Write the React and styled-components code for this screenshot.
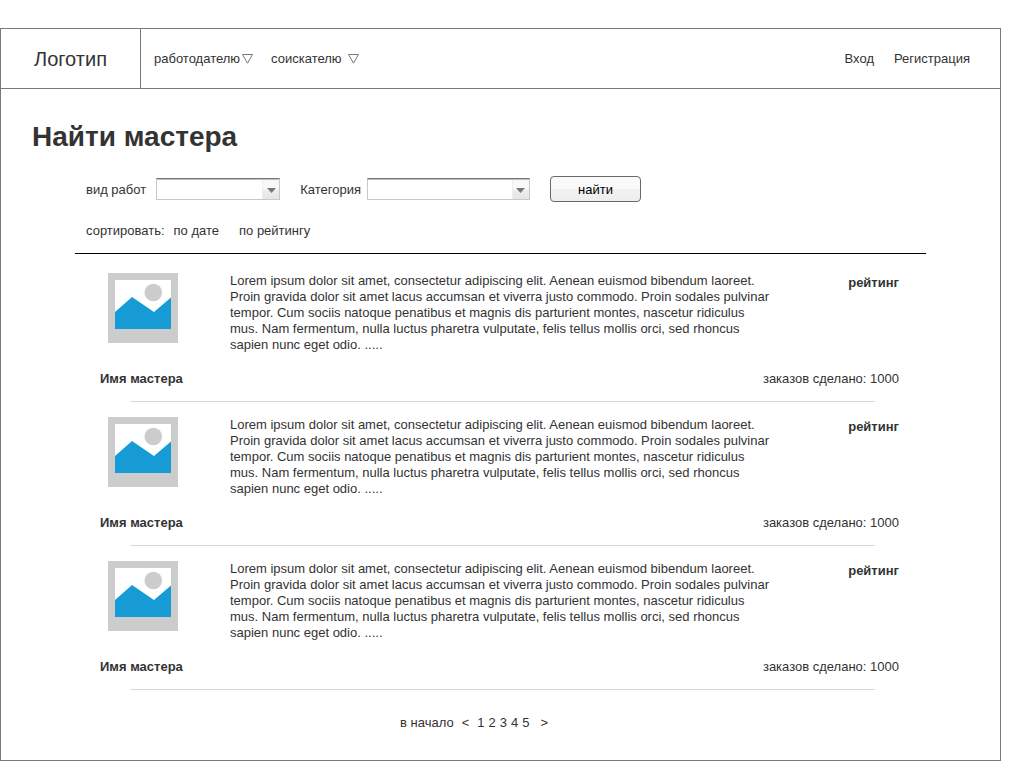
import React from 'react';
import styled, { createGlobalStyle } from 'styled-components';

const GlobalStyle = createGlobalStyle`
  *, *::before, *::after { box-sizing: border-box; }
  body {
    margin: 0;
    background: #fff;
    color: #333;
    font: 13px/16px "Liberation Sans", Arial, sans-serif;
  }
  a { color: inherit; text-decoration: none; }
`;

const Page = styled.div`
  margin: 28px 9px 9px 0;
  border: 1px solid #797979;
`;

const Header = styled.header`
  display: flex;
  align-items: stretch;
  height: 60px;
  border-bottom: 1px solid #797979;
`;

const Logo = styled.a`
  display: flex;
  align-items: center;
  justify-content: center;
  width: 140px;
  border-right: 1px solid #797979;
  font-size: 20px;
  line-height: 24px;
`;

const MainNav = styled.nav`
  display: flex;
  align-items: center;
  gap: 18px;
  padding-left: 13px;
`;

const MenuButton = styled.button`
  display: flex;
  align-items: center;
  gap: ${({ $gap }) => $gap}px;
  padding: 0;
  border: 0;
  background: none;
  color: inherit;
  font: inherit;
  cursor: pointer;
`;

const UserNav = styled.nav`
  display: flex;
  align-items: center;
  gap: 20px;
  margin-left: auto;
  padding-right: 30px;
`;

const Title = styled.h1`
  margin: 0;
  padding: 32px 31px 0;
  font-size: 28px;
  line-height: 32px;
`;

const Content = styled.main`
  margin: 0 74px;
`;

const Filters = styled.form`
  display: flex;
  align-items: center;
  gap: 20px;
  padding: 23px 11px 0;
`;

const Field = styled.div`
  display: flex;
  align-items: center;
  gap: ${({ $gap }) => $gap}px;
`;

const Label = styled.label`
  padding-top: 2px;
`;

const SelectBox = styled.div`
  display: grid;
  width: ${({ $width }) => $width}px;
  height: 22px;
  border: 1px solid #c8c8c8;
  border-top: 1px solid #777;
  box-shadow: inset 0 1px #c0c0c0;

  & > * { grid-area: 1 / 1; }
`;

const Select = styled.select`
  appearance: none;
  width: 100%;
  padding: 0 20px 0 4px;
  border: 0;
  background: transparent;
  color: inherit;
  font: inherit;
`;

const Arrow = styled.span`
  display: flex;
  align-items: center;
  justify-content: center;
  justify-self: end;
  width: 17px;
  margin-top: 1px;
  padding-top: 2px;
  border-left: 1px solid #eee;
  background: linear-gradient(#f8f8f8 50%, #ececec 50%, #e6e6e6);
  pointer-events: none;
`;

const SearchButton = styled.button`
  width: 91px;
  height: 26px;
  padding: 2px 0 0;
  border: 1px solid #686868;
  border-radius: 4px;
  background: linear-gradient(#fafafa 50%, #f2f2f2 50%, #eee);
  color: #000;
  font: inherit;
  cursor: pointer;
`;

const SortBar = styled.div`
  display: flex;
  padding: 21px 11px 14px;
  border-bottom: 1px solid #000;
`;

const SortLink = styled.a`
  margin-left: ${({ $gap }) => $gap}px;
`;

const MasterList = styled.ul`
  margin: 0;
  padding: 4px 0 0;
  list-style: none;
`;

const MasterCard = styled.article`
  display: grid;
  grid-template-columns: 155px minmax(0, 544px) 1fr;
  row-gap: 18px;
  padding: 15px 27px 0 0;
`;

const Avatar = styled.svg`
  display: block;
  margin-left: 33px;
`;

const About = styled.p`
  margin: 0;
`;

const Rating = styled.strong`
  padding-top: 2px;
  text-align: right;
`;

const MasterName = styled.h2`
  margin: 0;
  padding-left: 25px;
  font-size: 13px;
  line-height: 16px;
`;

const Orders = styled.span`
  grid-column: 2 / 4;
  text-align: right;
`;

const Divider = styled.hr`
  margin: 14px 51px 0 55px;
  border: 0;
  border-top: 1px solid #d7d7d7;
`;

const Pagination = styled.nav`
  display: flex;
  justify-content: center;
  gap: 8px;
  padding: 25px 53px 29px 0;
`;

const Pages = styled.span`
  display: flex;
  gap: 4px;
  padding-right: 3px;
`;

const description =
  'Lorem ipsum dolor sit amet, consectetur adipiscing elit. Aenean euismod bibendum laoreet. Proin gravida dolor sit amet lacus accumsan et viverra justo commodo. Proin sodales pulvinar tempor. Cum sociis natoque penatibus et magnis dis parturient montes, nascetur ridiculus mus. Nam fermentum, nulla luctus pharetra vulputate, felis tellus mollis orci, sed rhoncus sapien nunc eget odio. .....';

const masters = [1, 2, 3].map((id) => ({
  id,
  name: 'Имя мастера',
  description,
  orders: 1000,
}));

function Chevron() {
  return (
    <svg width="11" height="10" viewBox="0 0 11 10" aria-hidden="true">
      <path d="M0.500 0.500H10.500L5.500 9.200Z" fill="#fff" stroke="#797979" />
    </svg>
  );
}

function Dropdown({ id, label, width, gap }) {
  return (
    <Field $gap={gap}>
      <Label htmlFor={id}>{label}</Label>
      <SelectBox $width={width}>
        <Select id={id} />
        <Arrow>
          <svg width="9" height="5" viewBox="0 0 9 5" aria-hidden="true">
            <path d="M0 0H9L4.500 5Z" fill="#777" />
          </svg>
        </Arrow>
      </SelectBox>
    </Field>
  );
}

function Photo() {
  return (
    <Avatar width="70" height="70" viewBox="0 0 70 70" aria-hidden="true">
      <path d="M0 0H70V70H0Z" fill="#ccc" />
      <path d="M7 7H63V56H7Z" fill="#fff" />
      <circle cx="45.300" cy="19.500" r="8.800" fill="#ccc" />
      <path d="M7 39L24 24L46 39L63 24.500V56H7Z" fill="#169bd5" />
    </Avatar>
  );
}

export default function App() {
  return (
    <>
      <GlobalStyle />
      <Page>
        <Header>
          <Logo href="#">Логотип</Logo>
          <MainNav>
            <MenuButton type="button" $gap={2}>работодателю <Chevron /></MenuButton>
            <MenuButton type="button" $gap={6}>соискателю <Chevron /></MenuButton>
          </MainNav>
          <UserNav>
            <a href="#login">Вход</a>
            <a href="#register">Регистрация</a>
          </UserNav>
        </Header>
        <Title>Найти мастера</Title>
        <Content>
          <Filters onSubmit={(event) => event.preventDefault()}>
            <Dropdown id="work" label="вид работ" width={124} gap={10} />
            <Dropdown id="category" label="Категория" width={163} gap={6} />
            <SearchButton type="submit">найти</SearchButton>
          </Filters>
          <SortBar>
            <span>сортировать:</span>
            <SortLink href="#date" $gap={9}>по дате</SortLink>
            <SortLink href="#rating" $gap={20}>по рейтингу</SortLink>
          </SortBar>
          <MasterList>
            {masters.map((master) => (
              <li key={master.id}>
                <MasterCard>
                  <Photo />
                  <About>{master.description}</About>
                  <Rating>рейтинг</Rating>
                  <MasterName>{master.name}</MasterName>
                  <Orders>заказов сделано: {master.orders}</Orders>
                </MasterCard>
                <Divider />
              </li>
            ))}
          </MasterList>
          <Pagination aria-label="Страницы">
            <a href="#first">в начало</a>
            <a href="#prev">&lt;</a>
            <Pages>
              {[1, 2, 3, 4, 5].map((page) => (
                <a key={page} href={`#page-${page}`}>{page}</a>
              ))}
            </Pages>
            <a href="#next">&gt;</a>
          </Pagination>
        </Content>
      </Page>
    </>
  );
}
